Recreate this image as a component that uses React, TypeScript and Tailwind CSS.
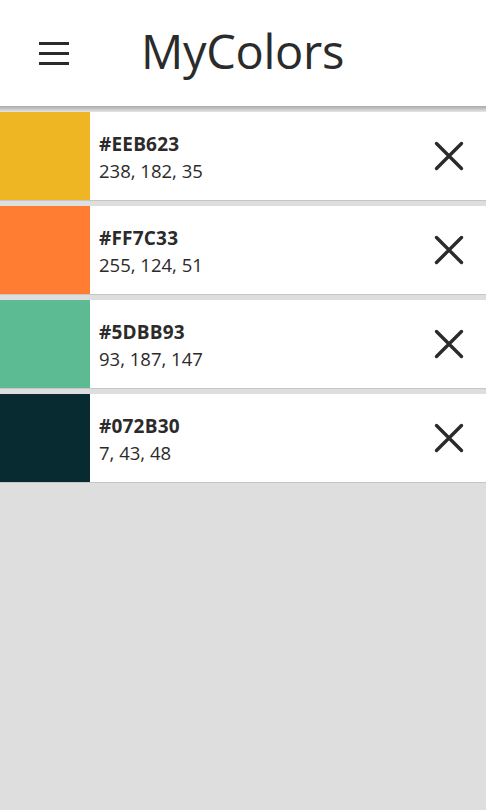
const colors = [
  { hex: "#EEB623", rgb: "238, 182, 35", swatch: "bg-[#eeb623]" },
  { hex: "#FF7C33", rgb: "255, 124, 51", swatch: "bg-[#ff7c33]" },
  { hex: "#5DBB93", rgb: "93, 187, 147", swatch: "bg-[#5dbb93]" },
  { hex: "#072B30", rgb: "7, 43, 48", swatch: "bg-[#072b30]" },
]

function CloseIcon() {
  return (
    <svg width="32" height="32" viewBox="0 0 32 32" fill="none" stroke="#2b2b2b" strokeWidth="3.4" strokeLinecap="round">
      <path d="M3.5 3.5 L28.5 28.5 M28.5 3.5 L3.5 28.5" />
    </svg>
  )
}

export default function App() {
  return (
    <div className="min-h-[810px] bg-[#dedede] font-['Open_Sans',sans-serif] text-[#2b2b2b]">
      {/* Header */}
      <header className="flex h-[106px] items-center bg-white">
        <button className="ml-[39px] flex w-[30px] flex-col gap-[7px]">
          <span className="h-[3px] w-full bg-[#2b2b2b]" />
          <span className="h-[3px] w-full bg-[#2b2b2b]" />
          <span className="h-[3px] w-full bg-[#2b2b2b]" />
        </button>
        <h1 className="ml-[72px] text-[47px] leading-none tracking-[-0.3px] pb-[3px]">MyColors</h1>
      </header>
      <div className="h-[6px] bg-gradient-to-b from-[#a9a9a9] to-[#e6e6e6]" />

      {/* Color list */}
      <ul>
        {colors.map((c) => (
          <li key={c.hex} className="mb-[5px] flex h-[89px] border-b border-[#c6c6c6] bg-white">
            <div className={`w-[90px] shrink-0 ${c.swatch}`} />
            <div className="flex flex-1 flex-col justify-center pl-[9px] pt-[2px]">
              <span className="text-[19px] font-bold leading-[28px] tracking-[0.2px]">{c.hex}</span>
              <span className="text-[18.5px] leading-[26px]">{c.rgb}</span>
            </div>
            <button className="mr-[21px] flex w-[32px] items-center justify-center">
              <CloseIcon />
            </button>
          </li>
        ))}
      </ul>
    </div>
  )
}
